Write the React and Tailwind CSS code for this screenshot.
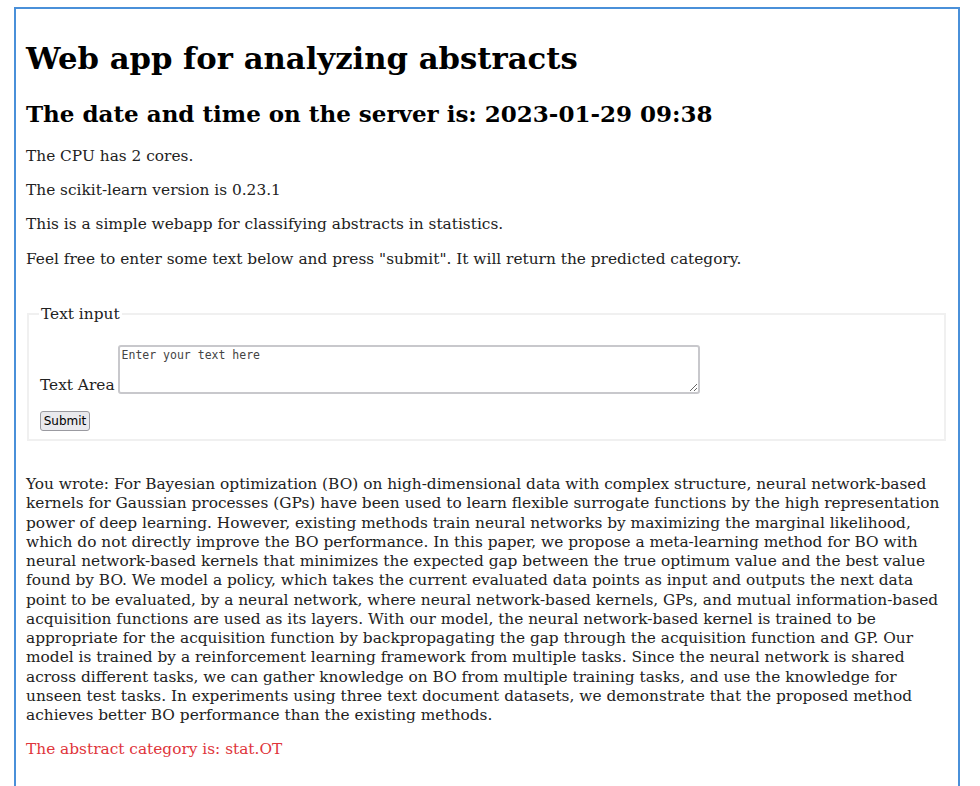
import React from "react";

const abstract =
  "You wrote: For Bayesian optimization (BO) on high-dimensional data with complex structure, neural network-based kernels for Gaussian processes (GPs) have been used to learn flexible surrogate functions by the high representation power of deep learning. However, existing methods train neural networks by maximizing the marginal likelihood, which do not directly improve the BO performance. In this paper, we propose a meta-learning method for BO with neural network-based kernels that minimizes the expected gap between the true optimum value and the best value found by BO. We model a policy, which takes the current evaluated data points as input and outputs the next data point to be evaluated, by a neural network, where neural network-based kernels, GPs, and mutual information-based acquisition functions are used as its layers. With our model, the neural network-based kernel is trained to be appropriate for the acquisition function by backpropagating the gap through the acquisition function and GP. Our model is trained by a reinforcement learning framework from multiple tasks. Since the neural network is shared across different tasks, we can gather knowledge on BO from multiple training tasks, and use the knowledge for unseen test tasks. In experiments using three text document datasets, we demonstrate that the proposed method achieves better BO performance than the existing methods.";

export default function App() {
  return (
    <div className="bg-white min-h-[786px] pt-[7px] pl-[14px] font-['DejaVu_Serif',serif] text-[#222]">
      <div className="w-[946px] h-[800px] border-2 border-[#4a90d9] px-[10px]">
        <h1 className="mt-[29px] text-[30.7px] leading-[40px] font-bold text-black">
          Web app for analyzing abstracts
        </h1>
        <h2 className="mt-[21px] text-[23px] leading-[30px] font-bold text-black">
          The date and time on the server is: 2023-01-29 09:38
        </h2>
        <div className="text-[15.36px] leading-[20px]">
          <p className="mt-[17px]">The CPU has 2 cores.</p>
          <p className="mt-[14px]">The scikit-learn version is 0.23.1</p>
          <p className="mt-[14px]">This is a simple webapp for classifying abstracts in statistics.</p>
          <p className="mt-[15px]">
            Feel free to enter some text below and press "submit". It will return the predicted category.
          </p>
        </div>
        <fieldset className="mt-[35px] ml-[1px] mr-[2px] border-2 border-[#f0f0f0] px-[11px] pb-[8px] pt-[21px] text-[15.36px] leading-[20px]">
          <legend className="px-[2px] -ml-[1px]">Text input</legend>
          <div className="flex items-end gap-[3px]">
            <span className="shrink-0 -mb-[1px]">Text Area</span>
            <textarea
              className="shrink-0 w-[582px] h-[49px] border-2 border-[#c8c8cc] rounded-[3px] px-[2px] py-[1px] text-[11.5px] leading-[14px] font-['DejaVu_Sans_Mono',monospace] placeholder:text-[#444] resize-y"
              placeholder="Enter your text here"
            />
          </div>
          <button className="mt-[17px] w-[50px] h-[20px] border border-[#9a9aa0] rounded-[3px] bg-[#e9e9ed] text-[12px] leading-[16px] font-['DejaVu_Sans',sans-serif] text-black">
            Submit
          </button>
        </fieldset>
        <p className="mt-[34px] text-[15.36px] leading-[19.25px]">{abstract}</p>
        <p className="mt-[14px] text-[15.36px] leading-[20px] text-[#e0353b]">
          The abstract category is: stat.OT
        </p>
      </div>
    </div>
  );
}
